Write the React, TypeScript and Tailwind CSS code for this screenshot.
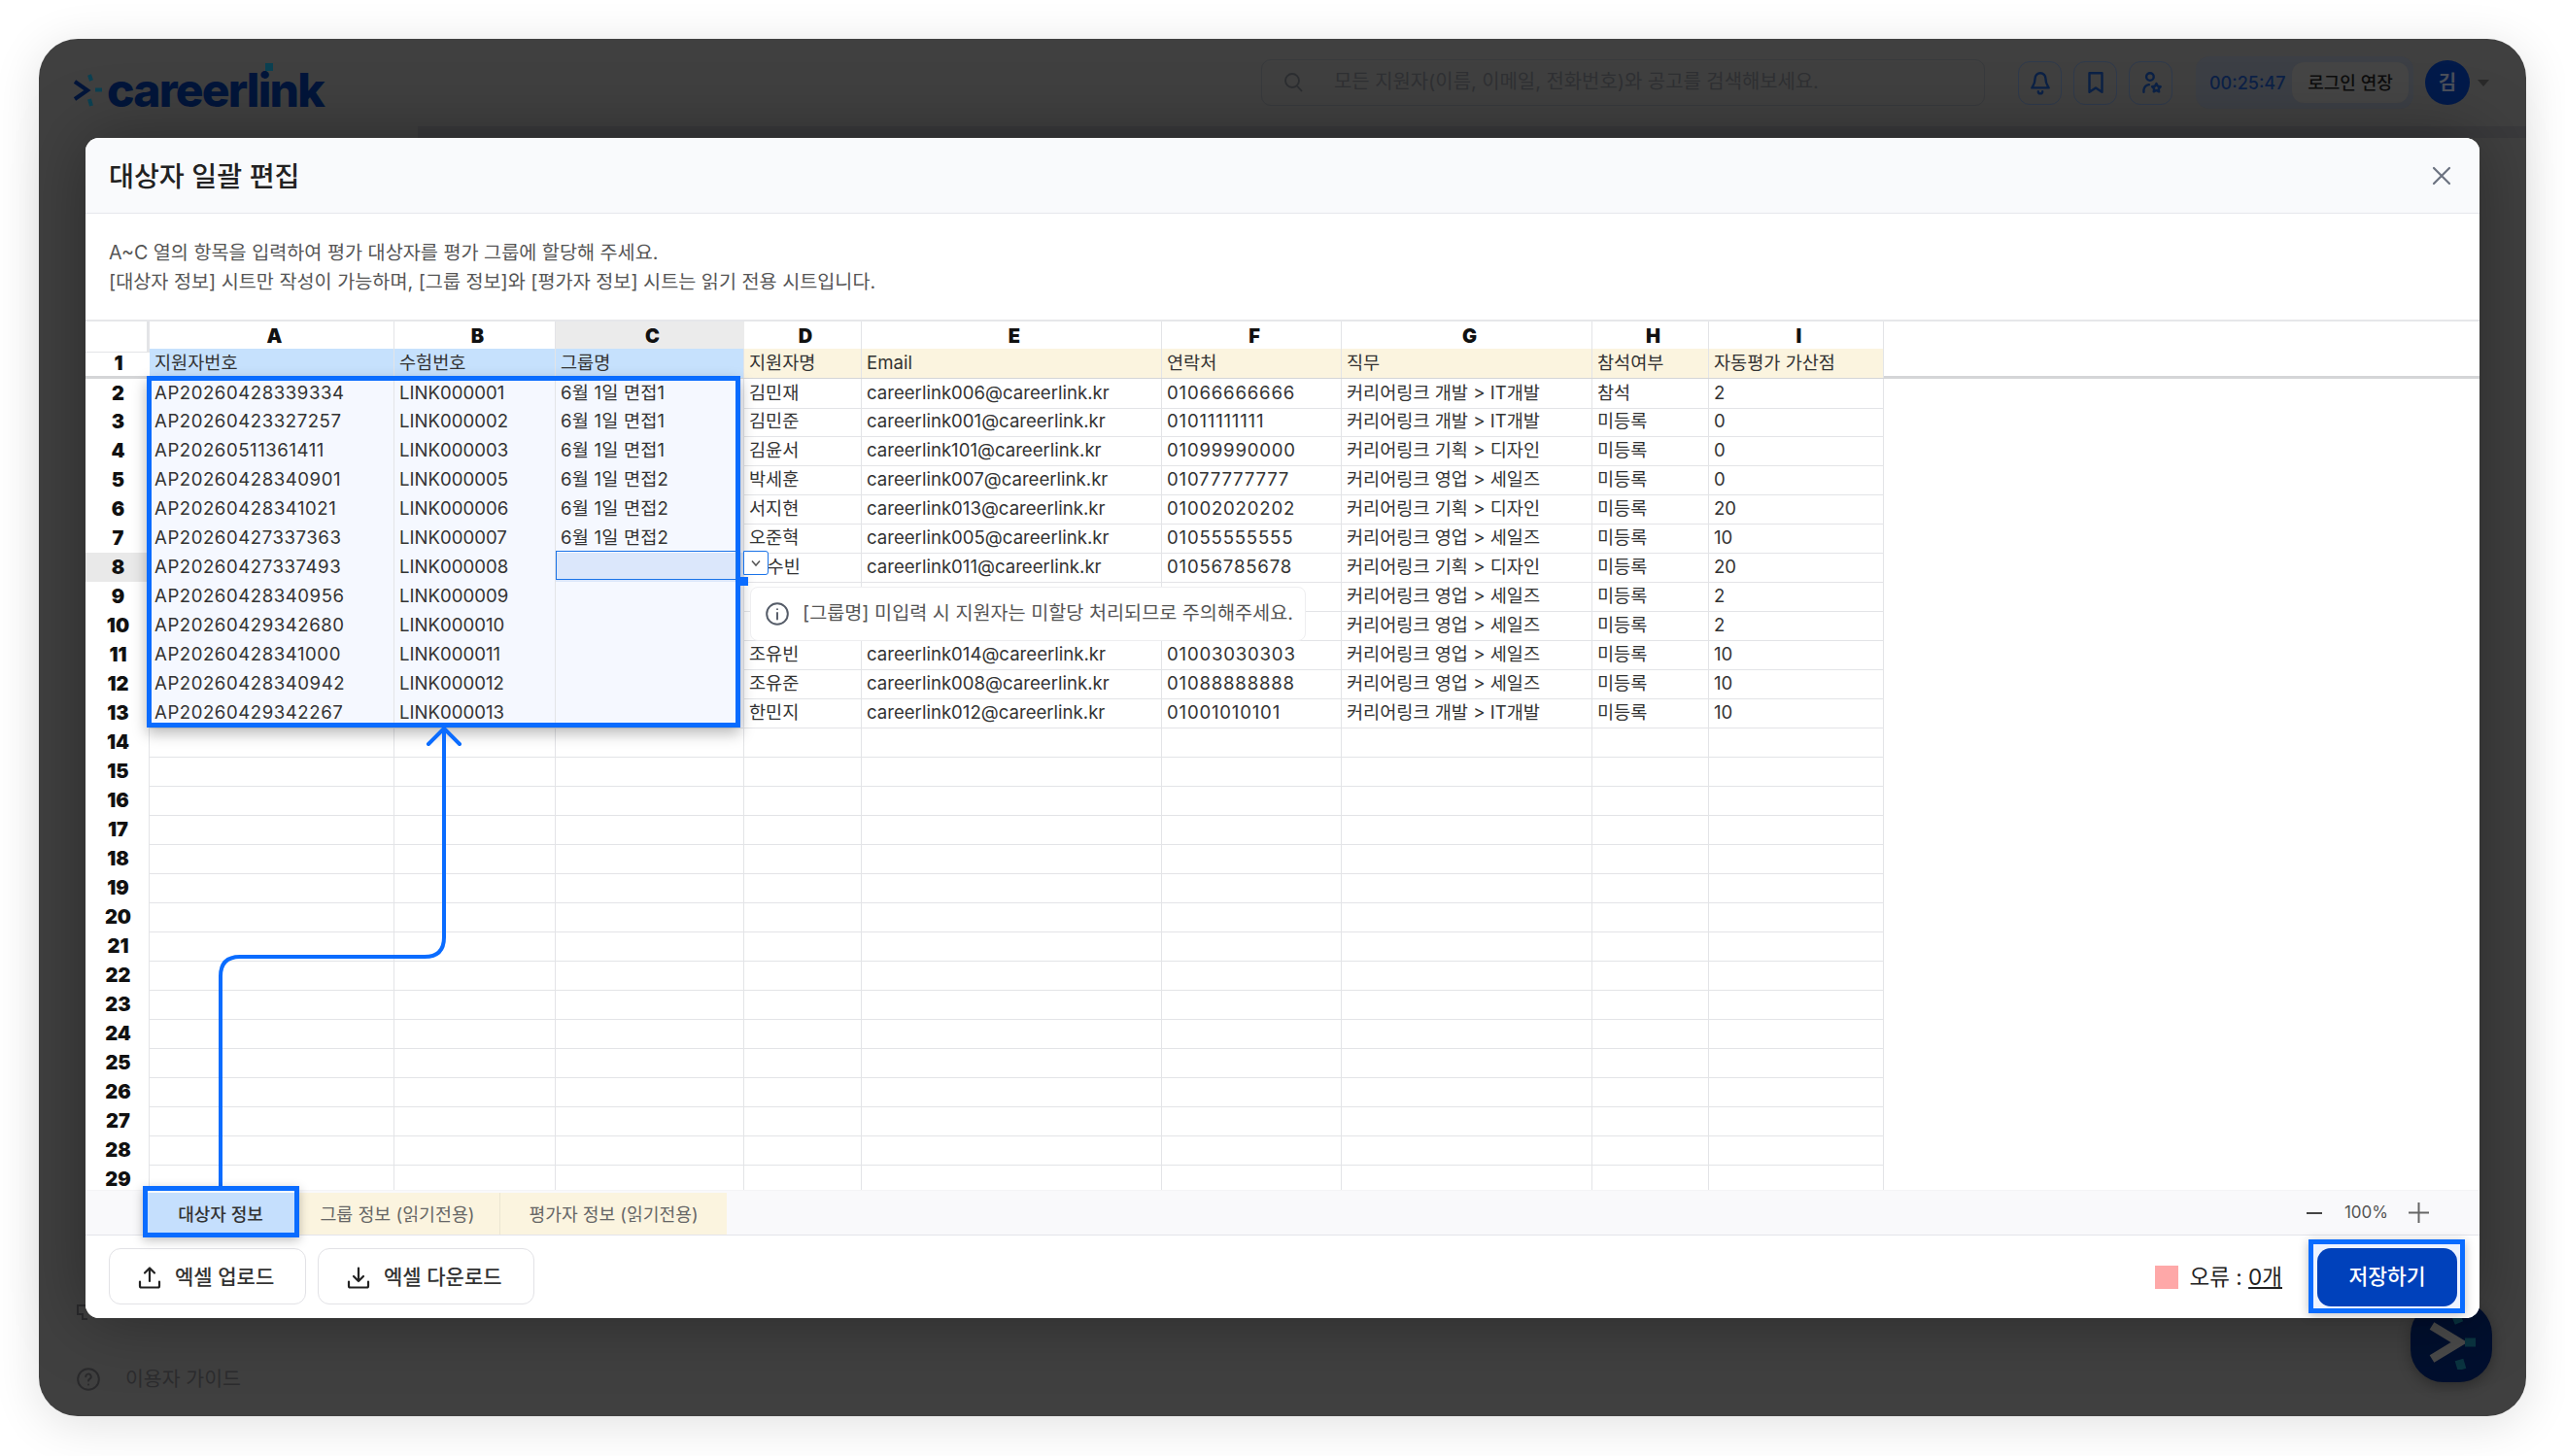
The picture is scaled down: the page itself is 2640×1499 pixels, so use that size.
import React from "react";

const cols = "grid grid-cols-[66px_252px_166px_194px_121px_309px_185px_258px_120px_180px]";
const letters = ["A", "B", "C", "D", "E", "F", "G", "H", "I"];
const heads = ["지원자번호", "수험번호", "그룹명", "지원자명", "Email", "연락처", "직무", "참석여부", "자동평가 가산점"];
const dev = "커리어링크 개발 > IT개발";
const plan = "커리어링크 기획 > 디자인";
const sales = "커리어링크 영업 > 세일즈";
const mail = (n: string) => `careerlink${n}@careerlink.kr`;
const rows: string[][] = [
  ["AP20260428339334", "LINK000001", "6월 1일 면접1", "김민재", mail("006"), "01066666666", dev, "참석", "2"],
  ["AP20260423327257", "LINK000002", "6월 1일 면접1", "김민준", mail("001"), "01011111111", dev, "미등록", "0"],
  ["AP20260511361411", "LINK000003", "6월 1일 면접1", "김윤서", mail("101"), "01099990000", plan, "미등록", "0"],
  ["AP20260428340901", "LINK000005", "6월 1일 면접2", "박세훈", mail("007"), "01077777777", sales, "미등록", "0"],
  ["AP20260428341021", "LINK000006", "6월 1일 면접2", "서지현", mail("013"), "01002020202", plan, "미등록", "20"],
  ["AP20260427337363", "LINK000007", "6월 1일 면접2", "오준혁", mail("005"), "01055555555", sales, "미등록", "10"],
  ["AP20260427337493", "LINK000008", "", "\u3000수빈", mail("011"), "01056785678", plan, "미등록", "20"],
  ["AP20260428340956", "LINK000009", "", "", "", "", sales, "미등록", "2"],
  ["AP20260429342680", "LINK000010", "", "", "", "", sales, "미등록", "2"],
  ["AP20260428341000", "LINK000011", "", "조유빈", mail("014"), "01003030303", sales, "미등록", "10"],
  ["AP20260428340942", "LINK000012", "", "조유준", mail("008"), "01088888888", sales, "미등록", "10"],
  ["AP20260429342267", "LINK000013", "", "한민지", mail("012"), "01001010101", dev, "미등록", "10"],
];
const blank = Array.from({ length: 16 }, (_, i) => i + 14);

function HeadIcon({ children }: { children: React.ReactNode }) {
  return (
    <div className="flex h-[45px] w-[45px] items-center justify-center rounded-[12px] border border-[#2f3a4c] text-[#0b2146]">
      <svg width="26" height="26" viewBox="0 0 24 24" fill="none" stroke="currentColor" strokeWidth="2.200" strokeLinecap="round" strokeLinejoin="round">
        {children}
      </svg>
    </div>
  );
}

function Cell({ children, bg = "", track = "" }: { children?: React.ReactNode; bg?: string; track?: string }) {
  return (
    <div className={`flex items-center overflow-hidden whitespace-nowrap border-r border-b border-[#e3e4e7] pb-[1px] pl-[5px] text-[18.6px] text-[#333] ${bg} ${track}`}>
      {children}
    </div>
  );
}

function RowHead({ n, active }: { n: number; active?: boolean }) {
  return (
    <div className={`flex items-center justify-center border-r border-b border-[#e3e4e7] pl-[2px] text-[20px] font-black text-[#111] ${active ? "bg-[#e9e9e9]" : "bg-white"}`}>
      {n}
    </div>
  );
}

export default function App() {
  return (
    <div className="h-[1499px] w-[2640px] overflow-hidden bg-white p-[40px] font-[Inter,'Noto_Sans_CJK_KR',sans-serif]">
      <div className="relative flex h-[1418px] w-[2560px] flex-col rounded-[40px] bg-[#404040] shadow-[0_8px_50px_rgba(0,0,0,0.12)]">
        {/* dimmed page header */}
        <div className="flex h-[90px] items-center pl-[35px]">
          <div className="relative mt-[16px] flex w-[262px] items-center gap-[4px]">
            <svg width="31" height="34" viewBox="0 0 31 34" fill="none">
              <path d="M2 8 L15 17 L2 26" stroke="#02153a" strokeWidth="4" />
              <path d="M17 1 L19 7" stroke="#0c4152" strokeWidth="4" />
              <path d="M23 16.500 H30" stroke="#0c4152" strokeWidth="4" />
              <path d="M17 26 L19 33" stroke="#0c4152" strokeWidth="4" />
            </svg>
            <span className="text-[48px] leading-[48px] font-extrabold tracking-[-1.8px] text-[#02153a]">careerlink</span>
            <span className="absolute top-[-4px] left-[198px] h-[8px] w-[8px] bg-[#0c4152]" />
          </div>
          <div className="ml-[961px] flex h-[48px] w-[745px] items-center gap-[30px] rounded-[10px] border border-[#383a3d] pl-[20px] text-[19.9px] text-[#2f3033]">
            <svg width="24" height="24" viewBox="0 0 24 24" fill="none" stroke="#2c2e31" strokeWidth="1.800">
              <circle cx="11" cy="10" r="7" />
              <path d="M16 15.500 L21 21" />
            </svg>
            <span>모든 지원자(이름, 이메일, 전화번호)와 공고를 검색해보세요.</span>
          </div>
          <div className="ml-[34px] flex gap-[12px]">
            <HeadIcon>
              <path d="M12 3a5 5 0 0 1 5 5c0 5 2 7 3 9H4c1-2 3-4 3-9a5 5 0 0 1 5-5Z" />
              <path d="M10 20.500a2 2 0 0 0 4 0" />
            </HeadIcon>
            <HeadIcon>
              <path d="M6 3h12v18l-6-4-6 4Z" />
            </HeadIcon>
            <HeadIcon>
              <circle cx="11" cy="6.500" r="3.500" />
              <path d="M5 21v-2a6 6 0 0 1 5-5" />
              <path d="m17 13 1.300 2.400 2.700.5-1.900 2 .4 2.700-2.500-1.200-2.500 1.200.4-2.700-1.900-2 2.700-.5Z" />
            </HeadIcon>
          </div>
          <div className="ml-[24px] flex h-[54px] w-[224px] items-center rounded-[14px] bg-[#3c3f45] pl-[14px] text-[18px]">
            <span className="w-[85px] font-medium text-[#0c2147]">00:25:47</span>
            <span className="flex h-[42px] w-[120px] items-center justify-center rounded-[12px] bg-[#454545] font-medium text-[#0d0d0d]">로그인 연장</span>
          </div>
          <div className="ml-[12px] flex h-[46px] w-[46px] items-center justify-center rounded-full bg-[#021a4a] text-[20px] font-bold text-[#4a4f5a]">김</div>
          <svg className="ml-[8px]" width="12" height="7" viewBox="0 0 12 7">
            <path d="M0 0H12L6 7Z" fill="#2a2a2a" />
          </svg>
        </div>
        <div className="ml-[390px] h-[12px] bg-[#3a3a3c]" />

        {/* dimmed footer */}
        <div className="mt-auto flex h-[51px] items-start gap-[25px] pl-[38px] text-[20.5px] text-[#2c2c2e]">
          <svg width="26" height="26" viewBox="0 0 24 24" fill="none" stroke="#2a2a2c" strokeWidth="1.800" strokeLinecap="round">
            <circle cx="12" cy="12" r="10" />
            <path d="M9.500 9.500a2.500 2.500 0 1 1 3.500 2.300c-.7.400-1 .9-1 1.700" />
            <path d="M12 17h.01" />
          </svg>
          <span className="leading-[26px]">이용자 가이드</span>
        </div>
        <svg className="absolute top-[1302px] left-[38px]" width="12" height="17" viewBox="0 0 12 17" fill="none" stroke="#2a2a2c" strokeWidth="2">
          <path d="M12 2H2v9h5v5h5" />
        </svg>
        <div className="absolute top-[1300px] left-[2441px] flex h-[83px] w-[84px] items-center justify-center rounded-[34px] bg-[#000f2e] shadow-[0_4px_14px_rgba(0,0,0,0.3)]">
          <svg width="56" height="56" viewBox="0 0 56 56" fill="none">
            <path d="M8 11 L36 28 L8 45" stroke="#4a4a4a" strokeWidth="9" />
            <path d="M33 1 L36 8 M42 28 H53 M36 46 L39 56" stroke="#0a3440" strokeWidth="9" />
          </svg>
        </div>

        {/* modal */}
        <div className="absolute top-[102px] left-[48px] flex h-[1215px] w-[2464px] flex-col rounded-[14px] bg-white shadow-[0_0_70px_rgba(0,0,0,0.35)]">
          <div className="flex h-[78px] items-center justify-between rounded-t-[14px] border-b border-[#e6e7ec] bg-[#f9fafc] pr-[29px] pl-[24px]">
            <span className="pt-[3px] text-[28.2px] font-medium text-[#222]">대상자 일괄 편집</span>
            <svg width="20" height="20" viewBox="0 0 20 20" stroke="#6b7280" strokeWidth="2.200" strokeLinecap="round">
              <path d="M2 2 L18 18 M18 2 L2 18" />
            </svg>
          </div>
          <div className="h-[109px] pt-[25px] pl-[24px] text-[19.65px] leading-[30px] text-[#555]">
            <p>A~C 열의 항목을 입력하여 평가 대상자를 평가 그룹에 할당해 주세요.</p>
            <p>[대상자 정보] 시트만 작성이 가능하며, [그룹 정보]와 [평가자 정보] 시트는 읽기 전용 시트입니다.</p>
          </div>

          <div className="h-[896px] overflow-hidden border-t-2 border-[#e6e7ea]">
            <div className={`${cols} h-[28px]`}>
              <div className="border-r-[3px] border-b border-[#e3e4e7]" />
              {letters.map((l) => (
                <div key={l} className={`flex items-center justify-center border-r border-b-[2px] pl-[6px] text-[20px] font-black text-[#111] ${l === "C" ? "border-r-[#ebebeb] border-b-[#1a73e8] bg-[#ebebeb]" : "border-[#e3e4e7]"}`}>
                  {l}
                </div>
              ))}
            </div>
            <div className="relative h-[31px] border-b-[3px] border-[#d4d5d7]">
              <div className={`${cols} h-[28px]`}>
                <div className="flex items-center justify-center pl-[2px] text-[20px] font-black text-[#111]">1</div>
                {heads.map((h, i) => (
                  <div key={h} className={`flex items-center border-r border-[#e3e4e7] pl-[5px] text-[18.6px] text-[#333] ${i < 3 ? "bg-[#c6e1fd]" : "bg-[#fbf4df]"}`}>
                    {h}
                  </div>
                ))}
              </div>
            </div>
            {rows.map((r, i) => (
              <div key={i} className={`${cols} ${i === 0 ? "h-[29px]" : "h-[30px]"}`}>
                <RowHead n={i + 2} active={i === 6} />
                {r.map((v, j) => (
                  <Cell
                    key={j}
                    bg={j < 3 ? (i === 6 && j === 2 ? "bg-[#dbe7fb]" : "bg-[#f5f8ff]") : ""}
                    track={j === 0 ? "tracking-[0.55px]" : j === 5 ? "tracking-[0.8px]" : j === 2 ? "tracking-[0.2px]" : ""}
                  >
                    {v}
                  </Cell>
                ))}
              </div>
            ))}
            {blank.map((n) => (
              <div key={n} className={`${cols} h-[30px]`}>
                <RowHead n={n} />
                {letters.map((l) => (
                  <Cell key={l} />
                ))}
              </div>
            ))}
          </div>

          <div className="flex h-[47px] items-start border-y border-b-[#e3e4ea] border-t-[#f4f4f6] bg-[#f9f9fb] pt-[2px] pl-[59px]">
            <div className="flex h-[43px] w-[160px] items-center justify-center bg-[#c5dffd] pt-[2px] text-[18px] font-medium text-[#333]">대상자 정보</div>
            <div className="flex h-[43px] w-[208px] items-center justify-center border-r border-[#ece6d2] bg-[#fbf4df] pt-[2px] pr-[3px] text-[18.4px] text-[#666]">그룹 정보 (읽기전용)</div>
            <div className="flex h-[43px] w-[233px] items-center justify-center bg-[#fbf4df] pt-[2px] text-[18.2px] text-[#666]">평가자 정보 (읽기전용)</div>
            <div className="ml-auto flex h-[41px] items-center pr-[52px] text-[#555]">
              <svg width="16" height="16" viewBox="0 0 16 16" stroke="#444" strokeWidth="2">
                <path d="M0 8 H16" />
              </svg>
              <span className="ml-[23px] text-[17px]">100%</span>
              <svg className="ml-[21px]" width="21" height="21" viewBox="0 0 21 21" stroke="#666" strokeWidth="2">
                <path d="M0 10.500 H21 M10.500 0 V21" />
              </svg>
            </div>
          </div>

          <div className="flex flex-1 items-start rounded-b-[14px] bg-white pt-[4px] pr-[15px] pl-[24px]">
            <div className="mt-[9px] flex h-[58px] w-[203px] items-center gap-[14px] rounded-[12px] border border-[#e2e2e6] pt-[2px] pl-[29px] text-[21px] font-medium text-[#333]">
              <svg width="24" height="24" viewBox="0 0 24 24" fill="none" stroke="#222" strokeWidth="2.200" strokeLinecap="round" strokeLinejoin="round">
                <path d="M12 16V2.500 M7 7.500 12 2.500l5 5" />
                <path d="M2 16.500V21a1.500 1.500 0 0 0 1.500 1.500h17A1.500 1.500 0 0 0 22 21v-4.500" />
              </svg>
              엑셀 업로드
            </div>
            <div className="mt-[9px] ml-[12px] flex h-[58px] w-[223px] items-center gap-[14px] rounded-[12px] border border-[#e2e2e6] pt-[2px] pl-[29px] text-[21px] font-medium text-[#333]">
              <svg width="24" height="24" viewBox="0 0 24 24" fill="none" stroke="#222" strokeWidth="2.200" strokeLinecap="round" strokeLinejoin="round">
                <path d="M12 2.500V16 M7 11 12 16l5-5" />
                <path d="M2 16.500V21a1.500 1.500 0 0 0 1.500 1.500h17A1.500 1.500 0 0 0 22 21v-4.500" />
              </svg>
              엑셀 다운로드
            </div>
            <div className="mt-[22px] mr-[27px] ml-auto flex items-center gap-[12px] text-[22.5px] text-[#222]">
              <span className="h-[24px] w-[24px] bg-[#fea8a8]" />
              <span>
                오류 : <span className="underline">0개</span>
              </span>
            </div>
            <div className="box-border h-[76px] w-[161px] border-[5px] border-[#0a6cff] bg-[#eef3ff] pt-[4px] pl-[4px] shadow-[0_2px_10px_rgba(0,0,0,0.25)]">
              <button className="h-[60px] w-[144px] rounded-[14px] bg-[#0041bb] pb-[2px] text-[21.5px] font-medium text-white">저장하기</button>
            </div>
          </div>

          {/* annotations */}
          <div className="pointer-events-none absolute top-[245px] left-[63px] h-[362px] w-[611px] border-[5px] border-[#0a6cff] shadow-[0_6px_14px_rgba(0,0,0,0.28)]" />
          <div className="absolute top-[425px] left-[484px] h-[30px] w-[186px] border border-[#1a73e8]" />
          <div className="absolute top-[425px] left-[677px] flex h-[25px] w-[26px] items-center justify-center rounded-r-[3px] border border-[#1a73e8] bg-white">
            <svg width="10" height="8" viewBox="0 0 10 8" fill="none" stroke="#555" strokeWidth="1.500">
              <path d="M1 1.500 5 6l4-4.500" />
            </svg>
          </div>
          <div className="absolute top-[452px] left-[674px] h-[9px] w-[8px] bg-[#0a6cff]" />
          <div className="absolute top-[462px] left-[684px] flex h-[56px] w-[572px] items-center gap-[13px] rounded-[8px] border border-[#eeeef0] bg-white pl-[14px] text-[19.65px] text-[#555]">
            <svg width="26" height="26" viewBox="0 0 24 24" fill="none" stroke="#555c68" strokeWidth="1.800" strokeLinecap="round">
              <circle cx="12" cy="12" r="10" />
              <path d="M12 11v6 M12 7.500h.01" />
            </svg>
            [그룹명] 미입력 시 지원자는 미할당 처리되므로 주의해주세요.
          </div>
          <svg className="pointer-events-none absolute top-[606px] left-[130px]" width="260" height="475" viewBox="0 0 260 475" fill="none" stroke="#0a6cff" strokeWidth="4" strokeLinecap="round" strokeLinejoin="round">
            <path d="M9 473 V257 Q9 237 29 237 H219 Q239 237 239 217 V2" />
            <path d="M223 18 L239 2 L255 18" />
          </svg>
          <div className="pointer-events-none absolute top-[1079px] left-[59px] h-[53px] w-[161px] border-[5px] border-[#0a6cff] shadow-[0_3px_10px_rgba(0,0,0,0.25)]" />
        </div>
      </div>
    </div>
  );
}
